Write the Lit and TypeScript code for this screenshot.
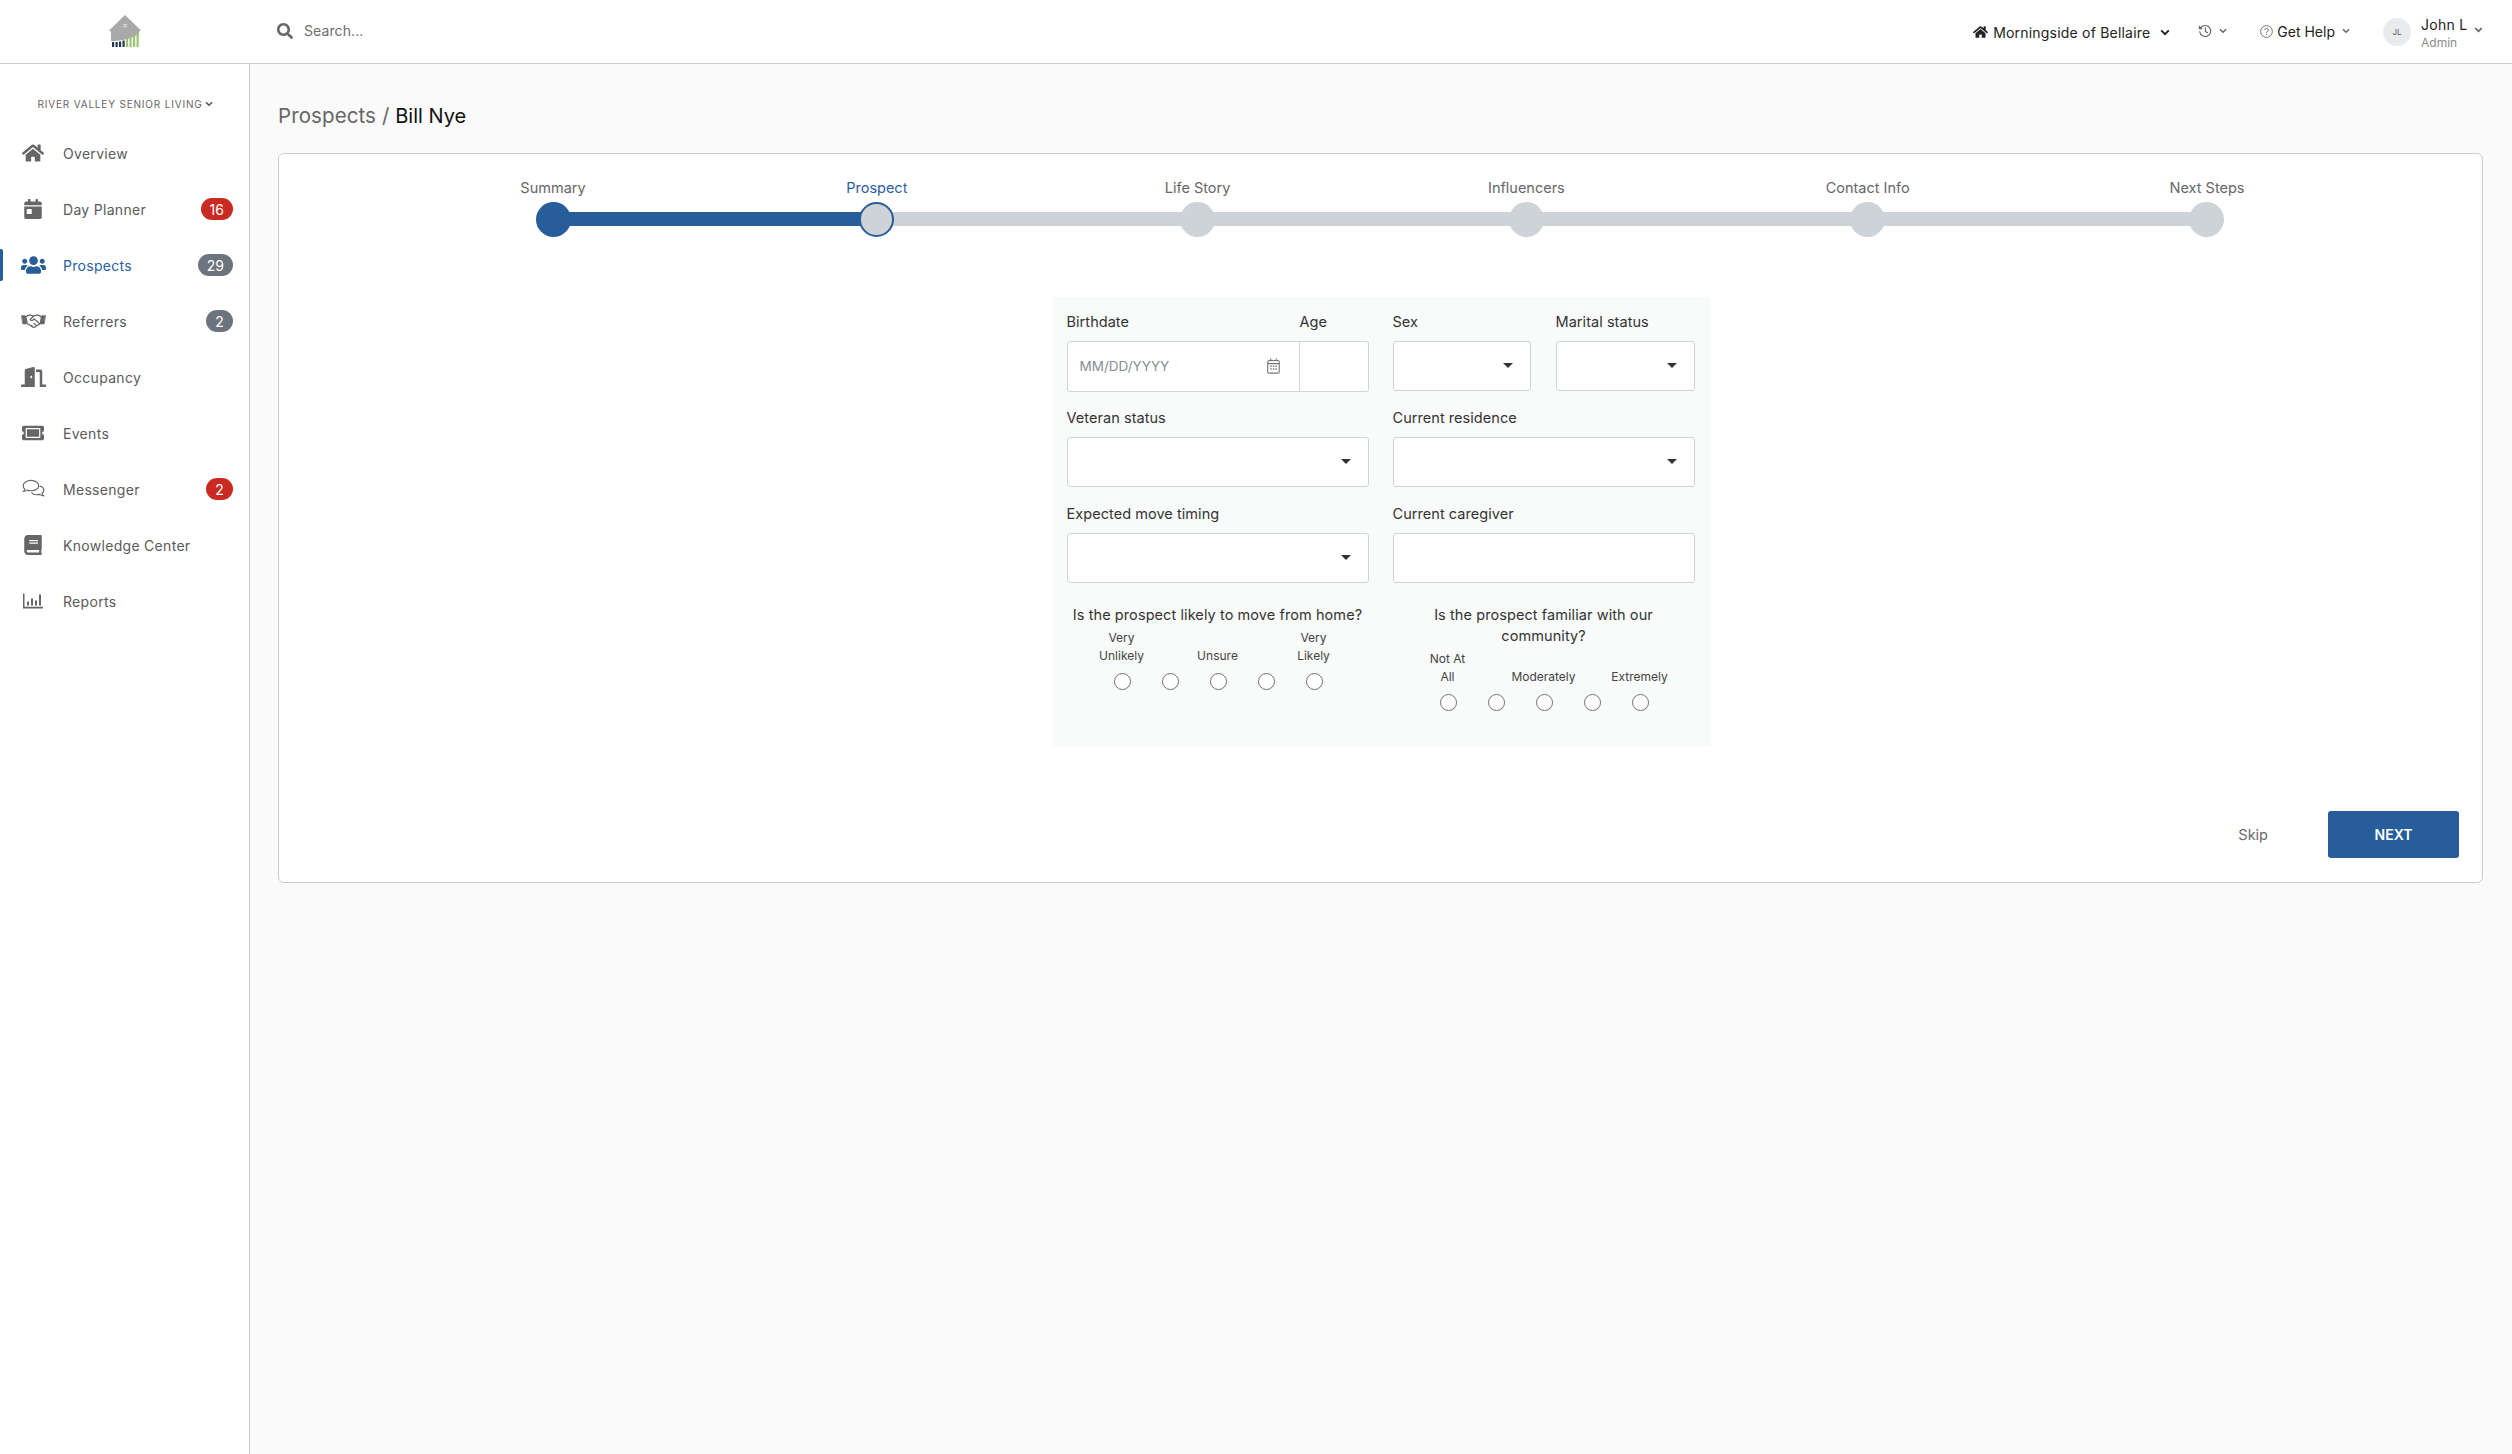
import { LitElement, html, css, svg } from "lit";
import { customElement } from "lit/decorators.js";

const I: Record<string, [string, any]> = {
  home: ["0 0 576 512", svg`<path d="M280.37 148.26L96 300.11V464a16 16 0 0 0 16 16l112.06-.29a16 16 0 0 0 15.92-16V368a16 16 0 0 1 16-16h64a16 16 0 0 1 16 16v95.64a16 16 0 0 0 16 16.05L464 480a16 16 0 0 0 16-16V300L295.67 148.26a12.19 12.19 0 0 0-15.3 0zM571.6 251.47L488 182.56V44.05a12 12 0 0 0-12-12h-56a12 12 0 0 0-12 12v72.61L318.47 43a48 48 0 0 0-61 0L4.34 251.47a12 12 0 0 0-1.6 16.9l25.5 31A12 12 0 0 0 45.15 301l235.22-193.74a12.19 12.19 0 0 1 15.3 0L530.9 301a12 12 0 0 0 16.9-1.6l25.5-31a12 12 0 0 0-1.7-16.93z"/>`],
  cal: ["0 0 448 512", svg`<path d="M0 464c0 26.5 21.5 48 48 48h352c26.5 0 48-21.5 48-48V192H0v272zm64-192c0-8.8 7.2-16 16-16h96c8.8 0 16 7.2 16 16v96c0 8.8-7.2 16-16 16H80c-8.8 0-16-7.2-16-16v-96zM400 64h-48V16c0-8.8-7.2-16-16-16h-32c-8.8 0-16 7.2-16 16v48H160V16c0-8.8-7.2-16-16-16h-32c-8.8 0-16 7.2-16 16v48H48C21.5 64 0 85.5 0 112v48h448v-48c0-26.5-21.5-48-48-48z"/>`],
  users: ["0 0 640 512", svg`<path d="M96 224c35.3 0 64-28.7 64-64s-28.7-64-64-64-64 28.7-64 64 28.7 64 64 64zm448 0c35.3 0 64-28.7 64-64s-28.7-64-64-64-64 28.7-64 64 28.7 64 64 64zm32 32h-64c-17.6 0-33.5 7.1-45.1 18.6 40.3 22.1 68.9 62 75.1 109.4h66c17.7 0 32-14.3 32-32v-32c0-35.3-28.7-64-64-64zm-256 0c61.9 0 112-50.1 112-112S381.9 32 320 32 208 82.1 208 144s50.1 112 112 112zm76.8 32h-8.3c-20.8 10-43.9 16-68.5 16s-47.6-6-68.5-16h-8.3C179.6 288 128 339.6 128 403.2V432c0 26.5 21.5 48 48 48h288c26.5 0 48-21.5 48-48v-28.8c0-63.6-51.6-115.2-115.2-115.2zm-223.7-13.4C161.5 263.1 145.6 256 128 256H64c-35.3 0-64 28.7-64 64v32c0 17.7 14.3 32 32 32h65.9c6.3-47.4 34.9-87.3 75.2-109.4z"/>`],
  hands: ["0 0 26 16", svg`<g fill="none" stroke="currentColor" stroke-width="1.300" stroke-linejoin="round" stroke-linecap="round"><path d="M.8 2.500h3.500l1.200 8.500H2.200zM25.200 2.500h-3.500L20.500 11h3.300z" fill="currentColor" stroke-width=".8"/><path d="M5 3.500l4-1.800 4 1.300 4-1.300 4.200 1.800-1 7-6.500 4.300-1.500-.6-5.800-3.700z"/><path d="M13 3l-3.500 3.500c.8 1.200 2.200 1.200 3.300.2l1-.8 5.700 5M10.500 12.500l1.600 1.300M13.500 10.500l2.300 2"/></g>`],
  door: ["0 0 640 512", svg`<path d="M624 448h-80V113.45C544 86.19 522.47 64 496 64H384v64h96v384h144c8.84 0 16-7.16 16-16v-32c0-8.84-7.16-16-16-16zM312.24 1.01l-192 49.74C105.99 54.44 96 67.7 96 82.92V448H16c-8.84 0-16 7.16-16 16v32c0 8.84 7.16 16 16 16h336V33.18c0-21.58-19.56-37.41-39.76-32.17zM264 288c-13.25 0-24-14.33-24-32s10.75-32 24-32 24 14.33 24 32-10.75 32-24 32z"/>`],
  ticket: ["0 0 576 512", svg`<path d="M128 160h320v192H128V160zm400 96c0 26.51 21.49 48 48 48v96c0 26.51-21.49 48-48 48H48c-26.51 0-48-21.49-48-48v-96c26.51 0 48-21.49 48-48s-21.49-48-48-48v-96c0-26.51 21.49-48 48-48h480c26.51 0 48 21.49 48 48v96c-26.51 0-48 21.49-48 48zm-48-104c0-13.255-10.745-24-24-24H120c-13.255 0-24 10.745-24 24v208c0 13.255 10.745 24 24 24h336c13.255 0 24-10.745 24-24V152z"/>`],
  chat: ["0 0 24 20", svg`<g fill="none" stroke="currentColor" stroke-width="1.200" stroke-linejoin="round"><path d="M9.500 1C5 1 1.200 3.400 1.200 6.600c0 1.500.8 2.800 2 3.800-.4 1-1.100 1.700-2 2.200 1.700 0 3.200-.6 4.300-1.400 1.200.4 2.600.6 4 .6 4.500 0 8-2.300 8-5.200S14 1 9.500 1z"/><path d="M18.500 7c2.600.7 4.300 2.300 4.300 4.200 0 1.300-.7 2.400-1.900 3.300.2 1 .9 1.900 1.900 2.700-1.800-.2-3.300-.8-4.300-1.600-1 .3-2 .4-3 .4-2.500 0-4.600-.9-5.800-2.300"/></g>`],
  book: ["0 0 448 512", svg`<path d="M448 360V24c0-13.300-10.700-24-24-24H96C43 0 0 43 0 96v320c0 53 43 96 96 96h328c13.300 0 24-10.700 24-24v-16c0-7.500-3.500-14.300-8.900-18.700-4.200-15.400-4.200-59.300 0-74.700 5.400-4.300 8.900-11.100 8.900-18.600zM128 134c0-3.300 2.700-6 6-6h212c3.300 0 6 2.700 6 6v20c0 3.300-2.700 6-6 6H134c-3.300 0-6-2.700-6-6v-20zm0 64c0-3.300 2.700-6 6-6h212c3.300 0 6 2.700 6 6v20c0 3.300-2.700 6-6 6H134c-3.300 0-6-2.700-6-6v-20zm253.400 250H96c-17.700 0-32-14.300-32-32 0-17.600 14.400-32 32-32h285.400c-1.900 17.100-1.900 46.900 0 64z"/>`],
  chart: ["0 0 20 15", svg`<path d="M0 0h1.500v13.300H20V15H0z"/><rect x="4" y="8" width="2" height="4"/><rect x="8" y="5" width="2" height="7"/><rect x="12" y="7" width="2" height="5"/><rect x="16" y="1" width="2" height="11"/>`],
  search: ["0 0 512 512", svg`<path d="M505 442.700L405.300 343c-4.500-4.500-10.600-7-17-7H372c27.600-35.300 44-79.700 44-128C416 93.100 322.900 0 208 0S0 93.100 0 208s93.100 208 208 208c48.300 0 92.700-16.400 128-44v16.300c0 6.400 2.500 12.500 7 17l99.700 99.700c9.400 9.400 24.600 9.400 33.900 0l28.300-28.300c9.400-9.400 9.400-24.600.1-34zM208 336c-70.700 0-128-57.200-128-128 0-70.700 57.200-128 128-128 70.700 0 128 57.200 128 128 0 70.700-57.200 128-128 128z"/>`],
  history: ["0 0 16 16", svg`<g fill="none" stroke="currentColor" stroke-width="1.300" stroke-linecap="round" stroke-linejoin="round"><path d="M3.200 4.200A6.300 6.300 0 1 1 2 9"/><path d="M8.500 4.500V8.500l2.500 1.500"/></g><path d="M1 1.500 5.500 6H1z"/>`],
  help: ["0 0 16 16", svg`<circle cx="8" cy="8" r="7.200" fill="none" stroke="currentColor" stroke-width="1"/><path d="M5.800 6.200C5.900 5 6.800 4.300 8 4.300c1.300 0 2.200.8 2.200 1.900 0 1.700-2.200 1.700-2.200 3.300" fill="none" stroke="currentColor" stroke-width="1.100"/><circle cx="8" cy="11.500" r=".8"/>`],
  minical: ["0 0 14 17", svg`<g fill="none" stroke="currentColor" stroke-width="1.200"><rect x=".8" y="2.600" width="12.400" height="13.600" rx="1.500"/><path d="M.8 6h12.400M4 .5v3M10 .5v3"/></g><path d="M3.500 8h1.500v1.500H3.500zM6.300 8h1.500v1.500H6.300zM9 8h1.500v1.500H9zM3.500 11h1.500v1.500H3.500zM6.300 11h1.500v1.500H6.300zM9 11h1.500v1.500H9z"/>`],
};

const icon = (n: string, cls = "") =>
  html`<svg class=${cls} viewBox=${I[n][0]} fill="currentColor" aria-hidden="true">${I[n][1]}</svg>`;
const chev = (cls = "chev") =>
  html`<svg class=${cls} viewBox="0 0 10 7" aria-hidden="true"><path d="M1.200 1.300 5 5.100l3.800-3.800" fill="none" stroke="currentColor" stroke-width="1.900"/></svg>`;

const NAV = [
  { l: "Overview", i: "home", w: 22 },
  { l: "Day Planner", i: "cal", b: "16", c: "red", w: 18 },
  { l: "Prospects", i: "users", b: "29", c: "gray", w: 25, active: true },
  { l: "Referrers", i: "hands", b: "2", c: "gray", w: 25 },
  { l: "Occupancy", i: "door", w: 25 },
  { l: "Events", i: "ticket", w: 22 },
  { l: "Messenger", i: "chat", b: "2", c: "red", w: 23 },
  { l: "Knowledge Center", i: "book", w: 18 },
  { l: "Reports", i: "chart", w: 20 },
];
const STEPS = ["Summary", "Prospect", "Life Story", "Influencers", "Contact Info", "Next Steps"];

@customElement("app-root")
export class AppRoot extends LitElement {
  static styles = css`
    :host { display: flex; flex-direction: column; height: 100vh; overflow: hidden; background: #fafafa; font-family: Inter, "Open Sans", sans-serif; font-size: 14px; color: #333; }
    * { box-sizing: border-box; }
    svg { display: block; flex: none; }
    .top { height: 64px; flex: none; background: #fff; border-bottom: 1px solid #cdcdcd; display: flex; align-items: center; }
    .logoBox { width: 250px; display: flex; justify-content: center; }
    .logo { width: 34px; height: 34px; margin-top: -1px; }
    .search { display: flex; align-items: center; gap: 11px; margin-left: 27px; color: #6d6d6d; flex: 1; margin-top: -2px; }
    .search svg { width: 16px; height: 16px; color: #666; }
    .search span { letter-spacing: .1px; }
    .tools { display: flex; align-items: center; color: #222; margin-right: 29px; }
    .t1 { display: flex; align-items: center; gap: 5px; font-size: 14px; letter-spacing: .2px; margin-top: 1px; }
    .t1 .hm { width: 15px; height: 14px; }
    .t1 .chev { width: 10px; height: 7px; margin-left: 5px; color: #222; }
    .t2 { display: flex; align-items: center; gap: 7px; margin-left: 28px; color: #666; margin-top: -1px; }
    .t2 .hi { width: 14px; height: 14px; }
    .chevs { width: 8px; height: 6px; color: #666; }
    .t3 { display: flex; align-items: center; gap: 4px; margin-left: 33px; margin-top: -1px; }
    .t3 .he { width: 13px; height: 13px; color: #555; }
    .t3 .chevs { margin-left: 3px; }
    .av { width: 28px; height: 28px; border-radius: 50%; background: #e9ecef; color: #555; font-size: 8px; display: flex; align-items: center; justify-content: center; margin-left: 33px; margin-top: 1px; }
    .who { margin: 4px 0 0 10px; display: flex; flex-direction: column; width: 42px; white-space: nowrap; }
    .who b { font-weight: 400; font-size: 14px; line-height: 18px; letter-spacing: .3px; }
    .who i { font-style: normal; font-size: 12px; line-height: 18px; color: #8a8a8a; }
    .t4 { width: 9px; height: 6px; margin: -3px 0 0 11px; color: #666; }
    .body { flex: 1; display: flex; min-height: 0; }
    .side { width: 250px; flex: none; background: #fff; border-right: 1px solid #c9c9c9; padding-top: 31px; }
    .org { display: flex; align-items: center; justify-content: center; gap: 2px; height: 17px; font-size: 10px; letter-spacing: .82px; color: #666; margin-left: 1px; }
    .org svg { width: 8px; height: 6px; color: #555; }
    .nav { margin-top: 13px; }
    .item { height: 56px; display: flex; align-items: center; position: relative; color: #5a5a5a; }
    .item.on { color: #2b609f; }
    .item.on::before { content: ""; position: absolute; left: 0; top: 12px; width: 3px; height: 32px; background: #275d9a; border-radius: 0 2px 2px 0; }
    .ic { width: 63px; display: flex; justify-content: center; padding-left: 3px; color: #666; }
    .item.on .ic { color: #275d9a; }
    .ic svg { height: 20px; }
    .lbl { flex: 1; letter-spacing: .3px; }
    .badge { height: 22px; min-width: 27px; padding: 0 9px; border-radius: 11px; color: #fff; font-size: 14px; display: flex; align-items: center; justify-content: center; margin-right: 16px; }
    .badge.red { background: #c92a22; }
    .badge.gray { background: #6c757d; }
    .main { flex: 1; padding: 35px 29px 0 28px; min-width: 0; }
    h1 { margin: 0; font-size: 20.500px; line-height: 33px; font-weight: 400; color: #666; letter-spacing: .1px; }
    h1 span { color: #111; font-size: 20px; letter-spacing: 0; }
    .card { margin-top: 20px; height: 730px; background: #fff; border: 1px solid #c8ccd0; border-radius: 6px; padding: 23px 23px 24px; display: flex; flex-direction: column; }
    .stepper { margin: 0 215px 0 217px; display: grid; grid-template-columns: 68px 62px 62px 78px 87px 74px; justify-content: space-between; position: relative; }
    .track { position: absolute; left: 34px; right: 37px; bottom: 11px; height: 14px; background: #ced3d8; }
    .fill { height: 100%; width: 324px; background: #275d9a; }
    .step { display: flex; flex-direction: column; align-items: center; position: relative; }
    .step span { line-height: 21px; white-space: nowrap; color: #666; font-size: 14.500px; }
    .step.cur span { color: #2b609f; }
    .dot { width: 35px; height: 35px; border-radius: 50%; background: #ced3d8; margin-top: 4px; }
    .step.done .dot { background: #275d9a; }
    .step.cur .dot { border: 2px solid #275d9a; }
    .center { display: flex; justify-content: center; margin: 60px 0 0 1px; }
    .panel { width: 659px; height: 450px; background: #f9fafa; padding: 14px 16px 0 15px; display: grid; grid-template-columns: 302px 302px; column-gap: 24px; align-content: start; row-gap: 16px; }
    .lab { display: block; line-height: 21px; margin-bottom: 9px; color: #333; white-space: nowrap; font-size: 14.500px; letter-spacing: .05px; }
    .box { height: 50px; background: #fff; border: 1px solid #ced4da; border-radius: 3px; position: relative; }
    .arrow { position: absolute; right: 17px; top: 21px; border: 5px solid transparent; border-top: 5px solid #333; border-bottom: 0; }
    .split { display: grid; grid-template-columns: 138px 139px; column-gap: 25px; }
    .dategrid { display: grid; grid-template-columns: 233px 69px; }
    .dateBox { height: 51px; margin-bottom: -1px; background: #fff; border: 1px solid #ced4da; display: flex; align-items: center; justify-content: space-between; padding: 0 19px 1px 12px; color: #868e96; border-radius: 3px 0 0 3px; font-size: 13.500px; }
    .dateBox svg { width: 13px; height: 16px; color: #777; }
    .ageBox { height: 51px; margin-bottom: -1px; background: #fff; border: 1px solid #ced4da; border-left: 0; border-radius: 0 3px 3px 0; }
    .q { text-align: center; margin-top: 5px; }
    .q p { margin: 0; line-height: 21px; color: #333; font-size: 14.500px; letter-spacing: .08px; }
    .opts { display: grid; grid-template-columns: repeat(5, 48px); justify-content: center; margin-top: 4px; }
    .opt { display: flex; justify-content: center; align-items: flex-end; font-size: 12px; line-height: 18px; color: #444; white-space: nowrap; }
    .rad { width: 48px; display: flex; justify-content: center; margin-top: 8px; padding-left: 1px; }
    .rad i { display: block; width: 17px; height: 17px; border: 1px solid #6f6f6f; border-radius: 50%; background: #fff; }
    .foot { margin-top: auto; display: flex; justify-content: flex-end; align-items: center; }
    .skip { color: #6b6b6b; margin-right: 60px; font-size: 14.500px; }
    .next { width: 131px; height: 47px; background: #275d9a; color: #fff; border-radius: 3px; font-weight: 600; font-size: 14px; display: flex; align-items: center; justify-content: center; }
  `;

  private radios(labels: any[]) {
    return html`<div class="opts">
      ${labels.map((l) => html`<div class="opt"><span>${l}</span></div>`)}
      ${labels.map(() => html`<div class="rad"><i></i></div>`)}
    </div>`;
  }

  render() {
    return html`
      <header class="top">
        <div class="logoBox">
          <svg class="logo" viewBox="0 0 34 34" aria-hidden="true">
            <path d="M17 1 33 16.500l-2 1V20C22 25.500 12 27 3 27V17.500l-2-1z" fill="#a9a9a9"/>
            <path d="M15.500 10h1.300v1.300h-1.300zM17.400 10h1.300v1.300h-1.300zM15.500 12h1.300v1.300h-1.300zM17.400 12h1.300v1.300h-1.300z" fill="#eee"/>
            <g fill="#22394f"><rect x="4" y="28" width="2.200" height="5"/><rect x="7.500" y="28" width="2.200" height="5"/><rect x="11" y="27.500" width="2.200" height="5.500"/><rect x="14.500" y="26.500" width="2.200" height="6.500"/></g>
            <g fill="#9cc272"><rect x="18" y="25" width="2.200" height="8"/><rect x="21.500" y="23.500" width="2.200" height="9.500"/><rect x="25" y="21" width="2.200" height="12"/><rect x="28.500" y="18.500" width="2.200" height="14.500"/></g>
          </svg>
        </div>
        <div class="search">${icon("search")}<span>Search...</span></div>
        <div class="tools">
          <div class="t1">${icon("home", "hm")}<span>Morningside of Bellaire</span>${chev()}</div>
          <div class="t2">${icon("history", "hi")}${chev("chevs")}</div>
          <div class="t3">${icon("help", "he")}<span>Get Help</span>${chev("chevs")}</div>
          <div class="av">JL</div>
          <div class="who"><b>John L</b><i>Admin</i></div>
          ${chev("t4")}
        </div>
      </header>
      <div class="body">
        <aside class="side">
          <div class="org"><span>RIVER VALLEY SENIOR LIVING</span>${chev("")}</div>
          <nav class="nav">
            ${NAV.map((n) => html`<div class="item ${n.active ? "on" : ""}">
              <div class="ic"><svg viewBox=${I[n.i][0]} fill="currentColor" style="width:${n.w}px" aria-hidden="true">${I[n.i][1]}</svg></div>
              <div class="lbl">${n.l}</div>
              ${n.b ? html`<div class="badge ${n.c}">${n.b}</div>` : ""}
            </div>`)}
          </nav>
        </aside>
        <main class="main">
          <h1>Prospects / <span>Bill Nye</span></h1>
          <section class="card">
            <div class="stepper">
              <div class="track"><div class="fill"></div></div>
              ${STEPS.map((s, i) => html`<div class="step ${i === 0 ? "done" : i === 1 ? "cur" : ""}"><span>${s}</span><div class="dot"></div></div>`)}
            </div>
            <div class="center">
              <div class="panel">
                <div class="dategrid">
                  <div><div class="lab">Birthdate</div><div class="dateBox"><span>MM/DD/YYYY</span>${icon("minical")}</div></div>
                  <div><div class="lab">Age</div><div class="ageBox"></div></div>
                </div>
                <div class="split">
                  <div><div class="lab">Sex</div><div class="box"><div class="arrow"></div></div></div>
                  <div><div class="lab">Marital status</div><div class="box"><div class="arrow"></div></div></div>
                </div>
                <div><div class="lab">Veteran status</div><div class="box"><div class="arrow"></div></div></div>
                <div><div class="lab">Current residence</div><div class="box"><div class="arrow"></div></div></div>
                <div><div class="lab">Expected move timing</div><div class="box"><div class="arrow"></div></div></div>
                <div><div class="lab">Current caregiver</div><div class="box"></div></div>
                <div class="q">
                  <p>Is the prospect likely to move from home?</p>
                  ${this.radios([html`Very<br />Unlikely`, "", "Unsure", "", html`Very<br />Likely`])}
                </div>
                <div class="q">
                  <p>Is the prospect familiar with our<br />community?</p>
                  ${this.radios([html`Not At<br />All`, "", "Moderately", "", "Extremely"])}
                </div>
              </div>
            </div>
            <div class="foot"><span class="skip">Skip</span><div class="next">NEXT</div></div>
          </section>
        </main>
      </div>
    `;
  }
}
